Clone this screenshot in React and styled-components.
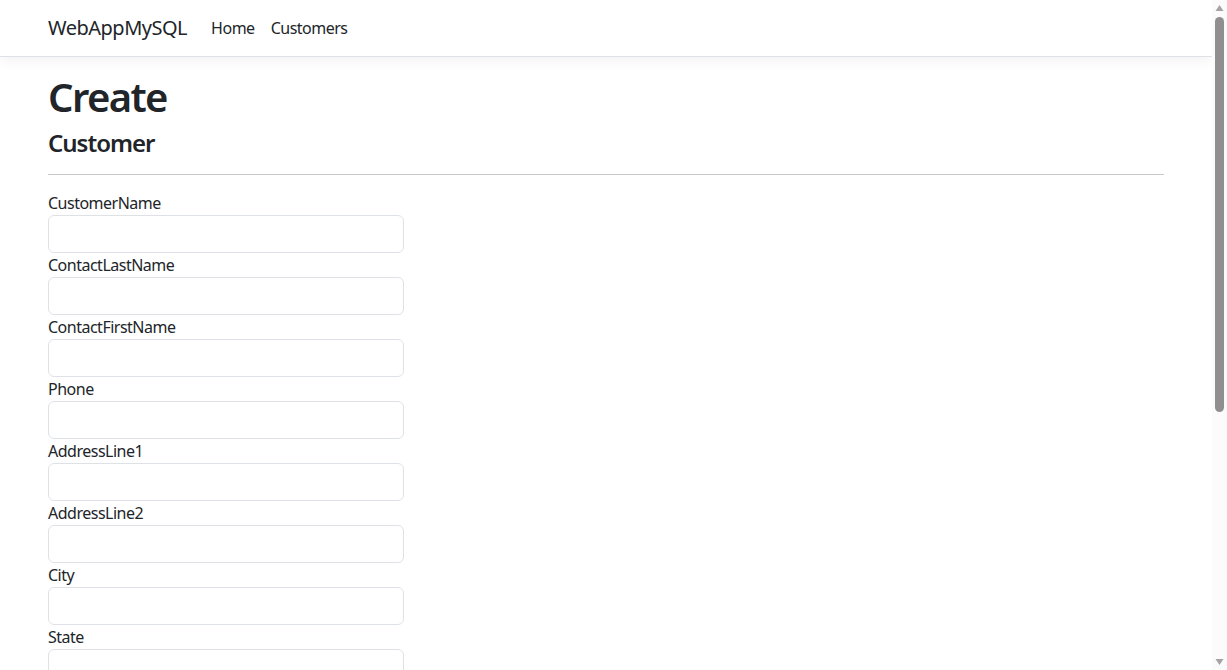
import styled, { createGlobalStyle } from 'styled-components';

const GlobalStyle = createGlobalStyle`
  *, *::before, *::after {
    box-sizing: border-box;
  }
  html, body {
    height: 100%;
    overflow: hidden;
  }
  body {
    margin: 0;
    font-family: "Segoe UI", "Noto Sans", "Open Sans", sans-serif;
    font-size: 16px;
    line-height: 1.5;
    letter-spacing: -0.5px;
    color: #212529;
    background: #fff;
  }
`

const Window = styled.div`
  display: flex;
  height: 100vh;
`

const Page = styled.div`
  flex: 1;
  min-width: 0;
  overflow-y: auto;
  scrollbar-width: none;
  &::-webkit-scrollbar {
    display: none;
  }
`

const ScrollBar = styled.div`
  flex: 0 0 15px;
  display: flex;
  flex-direction: column;
  align-items: center;
  background: #fbfbfb;
  padding: 4px 0;
`

const Arrow = styled.svg`
  width: 9px;
  height: 8px;
  flex: 0 0 auto;
  fill: #a3a3a3;
`

const Track = styled.div`
  flex: 1;
  width: 100%;
  display: flex;
  justify-content: center;
  padding: 5px 0;
`

const Thumb = styled.div`
  width: 9px;
  height: 395px;
  border-radius: 5px;
  background: #8f8f8f;
`

const Navbar = styled.nav`
  display: flex;
  align-items: center;
  padding: 8px 0;
  background: #fff;
  border-bottom: 1px solid #dee2e6;
  box-shadow: 0 4px 12px rgba(0, 0, 0, 0.05);
  margin-bottom: 16px;
`

const Container = styled.div`
  width: 100%;
  max-width: 1140px;
  margin: 0 auto;
  padding: 0 12px;
  display: ${(p) => (p.$flex ? 'flex' : 'block')};
  align-items: center;
`

const Brand = styled.a`
  font-size: 20px;
  letter-spacing: -0.5px;
  padding: 5px 0;
  margin-right: 16px;
  color: #212529;
  text-decoration: none;
  white-space: nowrap;
`

const NavList = styled.ul`
  display: flex;
  list-style: none;
  margin: 0;
  padding: 0;
`

const NavLink = styled.a`
  display: block;
  padding: 8px;
  color: #212529;
  text-decoration: none;
`

const Main = styled.main`
  padding-bottom: 16px;
`

const Title = styled.h1`
  font-size: 40px;
  font-weight: 600;
  letter-spacing: -1.6px;
  line-height: 1.2;
  margin: 0 0 8px;
`

const SubTitle = styled.h4`
  font-size: 24px;
  font-weight: 600;
  letter-spacing: -1px;
  line-height: 1.2;
  margin: 0 0 8px;
`

const Rule = styled.hr`
  margin: 16px 0;
  border: 0;
  border-top: 1px solid #212529;
  opacity: 0.25;
`

const Row = styled.div`
  display: flex;
  margin: 0 -12px;
`

const Col = styled.div`
  flex: 0 0 33.333%;
  padding: 0 12px;
`

const Group = styled.div``

const Label = styled.label`
  display: inline-block;
`

const Input = styled.input`
  display: block;
  width: 100%;
  height: 38px;
  padding: 6px 12px;
  font: inherit;
  color: #212529;
  background: #fff;
  border: 1px solid #dee2e6;
  border-radius: 6px;
  outline: none;
`

const SubmitButton = styled.input`
  margin-top: 16px;
  padding: 6px 12px;
  font: inherit;
  color: #fff;
  background: #0d6efd;
  border: 1px solid #0d6efd;
  border-radius: 6px;
`

const Link = styled.a`
  color: #0d6efd;
`

const Footer = styled.footer`
  line-height: 60px;
  white-space: nowrap;
  color: #6c757d;
  border-top: 1px solid #dee2e6;
`

const fields = [
  'CustomerName',
  'ContactLastName',
  'ContactFirstName',
  'Phone',
  'AddressLine1',
  'AddressLine2',
  'City',
  'State',
  'PostalCode',
  'Country',
  'SalesRepEmployeeNumber',
  'CreditLimit',
];

export default function App() {
  return (
    <>
      <GlobalStyle />
      <Window>
        <Page>
          <Navbar>
            <Container $flex>
              <Brand href="#">WebAppMySQL</Brand>
              <NavList>
                <li><NavLink href="#">Home</NavLink></li>
                <li><NavLink href="#">Customers</NavLink></li>
              </NavList>
            </Container>
          </Navbar>
          <Container>
            <Main>
              <Title>Create</Title>
              <SubTitle>Customer</SubTitle>
              <Rule />
              <Row>
                <Col>
                  <form onSubmit={(e) => e.preventDefault()}>
                    {fields.map((f) => (
                      <Group key={f}>
                        <Label htmlFor={f}>{f}</Label>
                        <Input id={f} name={f} type="text" />
                      </Group>
                    ))}
                    <Group>
                      <SubmitButton type="submit" value="Create" />
                    </Group>
                  </form>
                </Col>
              </Row>
              <div>
                <Link href="#">Back to List</Link>
              </div>
            </Main>
          </Container>
          <Footer>
            <Container>
              &copy; 2023 - WebAppMySQL - <Link href="#">Privacy</Link>
            </Container>
          </Footer>
        </Page>
        <ScrollBar>
          <Arrow viewBox="0 0 9 8"><path d="M4.5 1 L8.5 7 L0.5 7 Z" /></Arrow>
          <Track>
            <Thumb />
          </Track>
          <Arrow viewBox="0 0 9 8"><path d="M0.5 1 L8.5 1 L4.5 7 Z" /></Arrow>
        </ScrollBar>
      </Window>
    </>
  );
}
